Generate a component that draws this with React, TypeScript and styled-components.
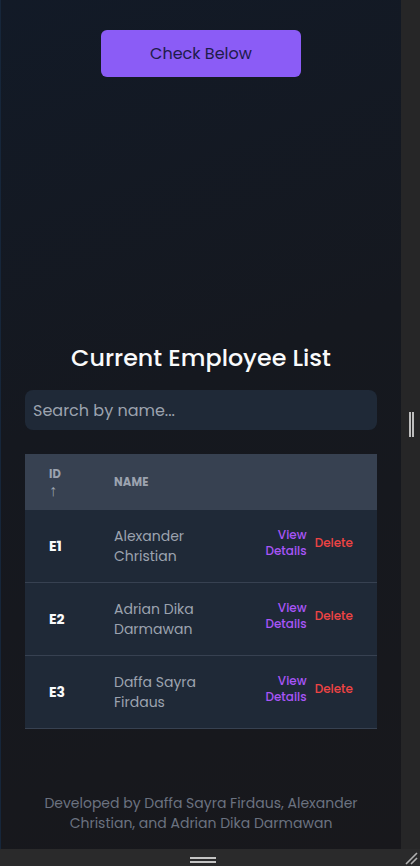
import React from "react";
import styled, { createGlobalStyle } from "styled-components";

const Global = createGlobalStyle`
  html, body { margin: 0; padding: 0; background: #262627; }
  body { font-family: Poppins, Inter, "Noto Sans", sans-serif; }
  * { box-sizing: border-box; }
`;

const Frame = styled.div`
  width: 420px;
  height: 866px;
  display: flex;
  flex-direction: column;
  overflow: hidden;
`;

const Top = styled.div`
  flex: 1;
  display: flex;
  min-height: 0;
`;

const Main = styled.main`
  width: 401px;
  display: flex;
  flex-direction: column;
  align-items: center;
  padding-top: 30px;
  background: linear-gradient(160deg, #121a27 0%, #15181f 45%, #18181c 100%);
  border-left: 1px solid #16263a;
`;

const Gutter = styled.div`
  flex: 1;
  background: #262627;
  display: flex;
  align-items: center;
  justify-content: center;
`;

const VHandle = styled.div`
  width: 5px;
  height: 25px;
  border-left: 2px solid #bdbdbd;
  border-right: 2px solid #bdbdbd;
  margin-left: 1px;
`;

const BottomBar = styled.div`
  height: 17px;
  background: #2a2a2b;
  display: flex;
  align-items: center;
  justify-content: center;
  position: relative;
`;

const HHandle = styled.div`
  width: 26px;
  height: 6px;
  border-top: 2px solid #c4c4c4;
  border-bottom: 2px solid #c4c4c4;
  margin-left: -14px;
  margin-top: 4px;
`;

const Resize = styled.svg`
  position: absolute;
  right: 2px;
  bottom: 1px;
`;

const CheckButton = styled.button`
  width: 200px;
  height: 47px;
  border: none;
  border-radius: 6px;
  background: #8b5cf6;
  color: #1e1b4b;
  font-family: inherit;
  font-size: 16px;
  font-weight: 400;
  cursor: pointer;
`;

const Card = styled.section`
  margin-top: 243px;
  width: 100%;
  padding: 20px 24px 24px 24px;
  display: flex;
  flex-direction: column;
  align-items: stretch;
`;

const Title = styled.h2`
  margin: 0 0 14px;
  text-align: center;
  color: #f9fafb;
  font-size: 23.8px;
  font-weight: 500;
  line-height: 36px;
`;

const Search = styled.input`
  height: 40px;
  border: none;
  border-radius: 8px;
  background: #1f2937;
  color: #e5e7eb;
  padding: 0 8px;
  font-family: inherit;
  font-size: 16px;
  outline: none;
  &::placeholder { color: #9ca3af; }
`;

const Table = styled.div`
  margin-top: 24px;
  display: grid;
  grid-template-columns: 65px 151px 1fr;
`;

const HeadCell = styled.div`
  background: #374151;
  padding: 12px 0 12px 24px;
  height: 56px;
  display: flex;
  align-items: center;
  color: #9ca3af;
  font-size: 11.5px;
  font-weight: 700;
  line-height: 16px;
  letter-spacing: 0.2px;
  text-transform: uppercase;
`;

const IdHead = styled.span`
  width: 17px;
  display: flex;
  flex-direction: column;
`;

const SortArrow = styled.span`
  font-family: "Liberation Sans", sans-serif;
  font-weight: 400;
  font-size: 16px;
  line-height: 17px;
  color: #9ca3af;
`;

const Cell = styled.div`
  background: #1f2937;
  border-bottom: 1px solid #374151;
  height: 73px;
  padding: 0 0 0 24px;
  display: flex;
  align-items: center;
  font-size: 14px;
  line-height: 20px;
`;

const IdCell = styled(Cell)`
  color: #f9fafb;
  font-weight: 700;
`;

const NameCell = styled(Cell)`
  color: #9ca3af;
  padding-right: 24px;
`;

const ActionCell = styled(Cell)`
  justify-content: flex-end;
  padding-right: 24px;
  padding-bottom: 7px;
  gap: 8px;
`;

const LinkButton = styled.button<{ $tone: "view" | "delete" }>`
  background: none;
  border: none;
  padding: 0;
  font-family: inherit;
  font-size: 12px;
  font-weight: 500;
  line-height: 16px;
  text-align: right;
  color: ${(p) => (p.$tone === "view" ? "#a855f7" : "#ef4444")};
  width: ${(p) => (p.$tone === "view" ? "min-content" : "auto")};
  cursor: pointer;
`;

const Footer = styled.footer`
  margin-top: 40px;
  width: 330px;
  text-align: center;
  color: #6b7280;
  font-size: 14px;
  line-height: 20px;
`;

const employees = [
  { id: "E1", name: "Alexander Christian" },
  { id: "E2", name: "Adrian Dika Darmawan" },
  { id: "E3", name: "Daffa Sayra Firdaus" },
];

export default function App() {
  return (
    <Frame>
      <Global />
      <Top>
        <Main>
          <CheckButton>Check Below</CheckButton>
          <Card>
            <Title>Current Employee List</Title>
            <Search placeholder="Search by name..." />
            <Table>
              <HeadCell>
                <IdHead>
                  <span>ID</span>
                  <SortArrow>↑</SortArrow>
                </IdHead>
              </HeadCell>
              <HeadCell>Name</HeadCell>
              <HeadCell />
              {employees.map((e) => (
                <React.Fragment key={e.id}>
                  <IdCell>{e.id}</IdCell>
                  <NameCell>{e.name}</NameCell>
                  <ActionCell>
                    <LinkButton $tone="view">View Details</LinkButton>
                    <LinkButton $tone="delete">Delete</LinkButton>
                  </ActionCell>
                </React.Fragment>
              ))}
            </Table>
          </Card>
          <Footer>
            Developed by Daffa Sayra Firdaus, Alexander Christian, and Adrian Dika Darmawan
          </Footer>
        </Main>
        <Gutter>
          <VHandle />
        </Gutter>
      </Top>
      <BottomBar>
        <HHandle />
        <Resize width="14" height="14" viewBox="0 0 14 14">
          <path d="M2 13 L13 2 M7 13 L13 7" stroke="#b0b0b0" strokeWidth="1.6" />
        </Resize>
      </BottomBar>
    </Frame>
  );
}
